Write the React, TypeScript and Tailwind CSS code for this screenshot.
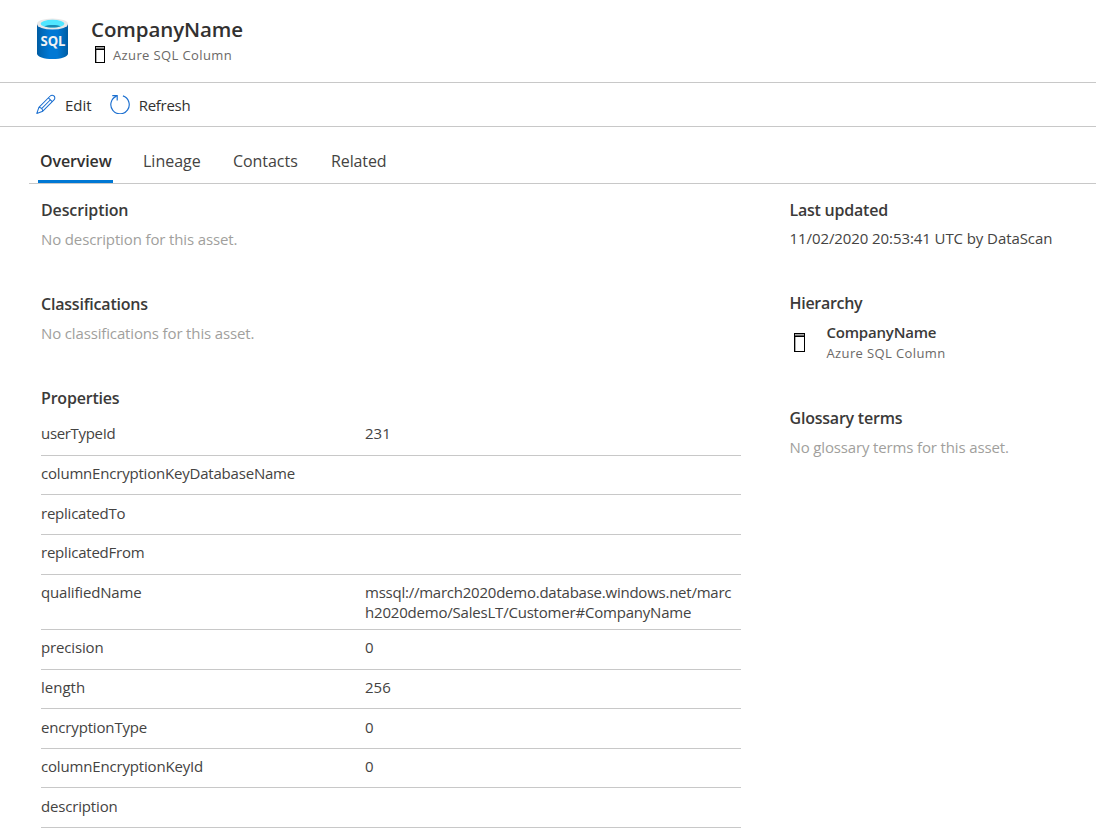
import type { ReactNode } from 'react';

type Property = {
  name: string;
  nameClass: string;
  value?: ReactNode;
  rowClass: string;
};

const properties: Property[] = [
  { name: 'userTypeId', nameClass: 'tracking-[-0.32px]', value: '231', rowClass: 'h-[40px] pt-[7px]' },
  { name: 'columnEncryptionKeyDatabaseName', nameClass: 'tracking-[-0.2px]', rowClass: 'h-[39px] pt-[7px]' },
  { name: 'replicatedTo', nameClass: 'tracking-[-0.23px]', rowClass: 'h-[40px] pt-[8px]' },
  { name: 'replicatedFrom', nameClass: 'tracking-[-0.22px]', rowClass: 'h-[40px] pt-[7px]' },
  {
    name: 'qualifiedName',
    nameClass: 'tracking-[-0.17px]',
    value: (
      <>
        <span className="block tracking-[-0.235px]">mssql://march2020demo.database.windows.net/marc</span>
        <span className="block tracking-[-0.2px]">h2020demo/SalesLT/Customer#CompanyName</span>
      </>
    ),
    rowClass: 'h-[55px] pt-[7px]',
  },
  { name: 'precision', nameClass: 'tracking-[-0.15px]', value: '0', rowClass: 'h-[40px] pt-[7px]' },
  { name: 'length', nameClass: '', value: '256', rowClass: 'h-[39px] pt-[7px]' },
  { name: 'encryptionType', nameClass: 'tracking-[-0.16px]', value: '0', rowClass: 'h-[40px] pt-[8px]' },
  { name: 'columnEncryptionKeyId', nameClass: 'tracking-[-0.17px]', value: '0', rowClass: 'h-[39px] pt-[7px]' },
  { name: 'description', nameClass: 'tracking-[-0.17px]', rowClass: 'h-[40px] pt-[8px]' },
];

function SqlDatabaseIcon() {
  return (
    <svg width="32" height="42" viewBox="0 0 32 42" className="block">
      <defs>
        <linearGradient id="dbBody" x1="0" x2="1" y1="0" y2="0">
          <stop offset="0" stopColor="#005ba1" />
          <stop offset="0.12" stopColor="#0067b5" />
          <stop offset="0.4" stopColor="#0078d4" />
          <stop offset="0.65" stopColor="#0078d4" />
          <stop offset="0.9" stopColor="#0065b2" />
          <stop offset="1" stopColor="#005ba1" />
        </linearGradient>
      </defs>
      <path d="M0 6v29.4c0 3.2 7 5.7 15.5 5.7s15.5-2.5 15.5-5.7V6z" fill="url(#dbBody)" />
      <ellipse cx="15.5" cy="6" rx="15.5" ry="5.6" fill="#e8e8e8" />
      <ellipse cx="15.5" cy="5.7" rx="11.9" ry="3.9" fill="#50e6ff" />
      <path d="M7.3 8.3c2-.7 4.9-1.2 8.2-1.2s6.2.5 8.2 1.2c-2 .8-4.9 1.3-8.2 1.3s-6.2-.5-8.2-1.3z" fill="#198ab3" />
      <text x="16" y="27.6" textAnchor="middle" fontSize="13.6" fontWeight="700" fill="#f2f2f2" textLength="25" lengthAdjust="spacingAndGlyphs" className="font-['Open_Sans',sans-serif]">
        SQL
      </text>
    </svg>
  );
}

function ColumnIcon({ width, height, className = '' }: { width: number; height: number; className?: string }) {
  return (
    <svg width={width} height={height} className={`block ${className}`} shapeRendering="crispEdges">
      <rect width={width} height={height} fill="#000" />
      <rect x="1" y="1" width={width - 2} height="1" fill="#aaa" />
      <rect x="1" y="2" width={width - 2} height="1" fill="#666" />
      <rect x="1" y="4" width={width - 2} height={height - 5} fill="#fff" />
      <rect x="1" y="4" width="1" height={height - 5} fill="#aaa" />
    </svg>
  );
}

function PencilIcon() {
  return (
    <svg width="20" height="20" viewBox="0 -0.4 20 20" className="block" fill="none" stroke="#1b6fd0" strokeWidth="1.05" strokeLinejoin="round">
      <path d="M0.8 19 2.9 12.9 14.2 1.6a2.6 2.6 0 0 1 3.8 0 2.6 2.6 0 0 1 0 3.8L6.8 16.8z" />
      <path d="M2.9 12.9c2 .3 3.6 1.9 3.9 3.9M12.4 3.4l3.8 3.8M5.9 13.9l8.3-8.3" />
    </svg>
  );
}

function RefreshIcon() {
  return (
    <svg width="20" height="20" viewBox="0 -0.4 20 20" className="block" fill="none" stroke="#1b6fd0" strokeWidth="1.15">
      <path d="M12.9 1.5A9.2 9.2 0 1 1 6.6 1.7" />
      <path d="M2.3 1.2h4.9v5" />
    </svg>
  );
}

function Heading({ children, className = '' }: { children: ReactNode; className?: string }) {
  return <h2 className={`text-[16px] leading-[22px] font-semibold text-[#3b3a39] ${className}`}>{children}</h2>;
}

export default function App() {
  return (
    <div className="h-[829px] w-[1096px] overflow-hidden bg-white font-['Open_Sans','Noto_Sans',sans-serif] text-[15px] leading-[20px] whitespace-nowrap text-[#444342]">
      <header className="flex h-[83px] border-b border-[#c8c8c8] pt-[18px] pl-[37px]">
        <SqlDatabaseIcon />
        <div className="ml-[22px]">
          <h1 className="-mt-[3px] text-[20.5px] leading-[28px] font-semibold tracking-[-0.1px] text-[#323130]">CompanyName</h1>
          <div className="mt-[2px] flex">
            <ColumnIcon width={10} height={17} className="mt-[1px] ml-[4px]" />
            <span className="ml-[8px] text-[13px] leading-[20px] tracking-[0.38px] text-[#6b6967]">Azure SQL Column</span>
          </div>
        </div>
      </header>

      <div className="flex h-[44px] border-b border-[#c8c8c8] pt-[11px] pl-[36px] text-[#323130]">
        <button className="flex">
          <PencilIcon />
          <span className="mt-[1px] ml-[9px]">Edit</span>
        </button>
        <button className="ml-[18px] flex">
          <RefreshIcon />
          <span className="mt-[1px] ml-[9px] tracking-[-0.28px]">Refresh</span>
        </button>
      </div>

      <nav className="ml-[29px] flex h-[57px] border-b border-[#c8c8c8] pt-[23px] pl-[9px] text-[16px] leading-[22px]">
        <div className="h-[33px] w-[75px] border-b-[3px] border-[#0078d4] pl-[2px] font-semibold tracking-[-0.12px] text-[#323130]">Overview</div>
        <div className="ml-[30px] w-[58px]">Lineage</div>
        <div className="ml-[32px] w-[67px] tracking-[-0.05px]">Contacts</div>
        <div className="ml-[31px] tracking-[-0.109px]">Related</div>
      </nav>

      <main className="flex pl-[41px]">
        <section className="w-[700px] pt-[15px]">
          <Heading className="tracking-[-0.12px]">Description</Heading>
          <p className="mt-[8px] tracking-[-0.135px] text-[#a19f9d]">No description for this asset.</p>
          <Heading className="mt-[44px] tracking-[-0.2px]">Classifications</Heading>
          <p className="mt-[8px] tracking-[-0.145px] text-[#a19f9d]">No classifications for this asset.</p>
          <Heading className="mt-[44px] tracking-[-0.2px]">Properties</Heading>
          <div className="mt-[7px]">
            {properties.map((p) => (
              <div key={p.name} className={`flex border-b border-[#c8c8c8] ${p.rowClass}`}>
                <div className={`w-[324px] ${p.nameClass}`}>{p.name}</div>
                <div>{p.value}</div>
              </div>
            ))}
          </div>
        </section>

        <aside className="ml-[48.5px] pt-[15px]">
          <Heading className="tracking-[-0.23px]">Last updated</Heading>
          <p className="mt-[7px] tracking-[-0.085px]">11/02/2020 20:53:41 UTC by DataScan</p>
          <Heading className="mt-[44px] tracking-[-0.3px]">Hierarchy</Heading>
          <div className="mt-[8px] flex">
            <ColumnIcon width={11} height={19} className="mt-[11px] ml-[4px]" />
            <div className="ml-[22px]">
              <div className="font-semibold tracking-[-0.2px] text-[#3b3a39]">CompanyName</div>
              <div className="mt-[1px] text-[13px] tracking-[0.38px] text-[#6b6967]">Azure SQL Column</div>
            </div>
          </div>
          <Heading className="mt-[44px] tracking-[-0.22px]">Glossary terms</Heading>
          <p className="mt-[8px] tracking-[-0.145px] text-[#a19f9d]">No glossary terms for this asset.</p>
        </aside>
      </main>
    </div>
  );
}
